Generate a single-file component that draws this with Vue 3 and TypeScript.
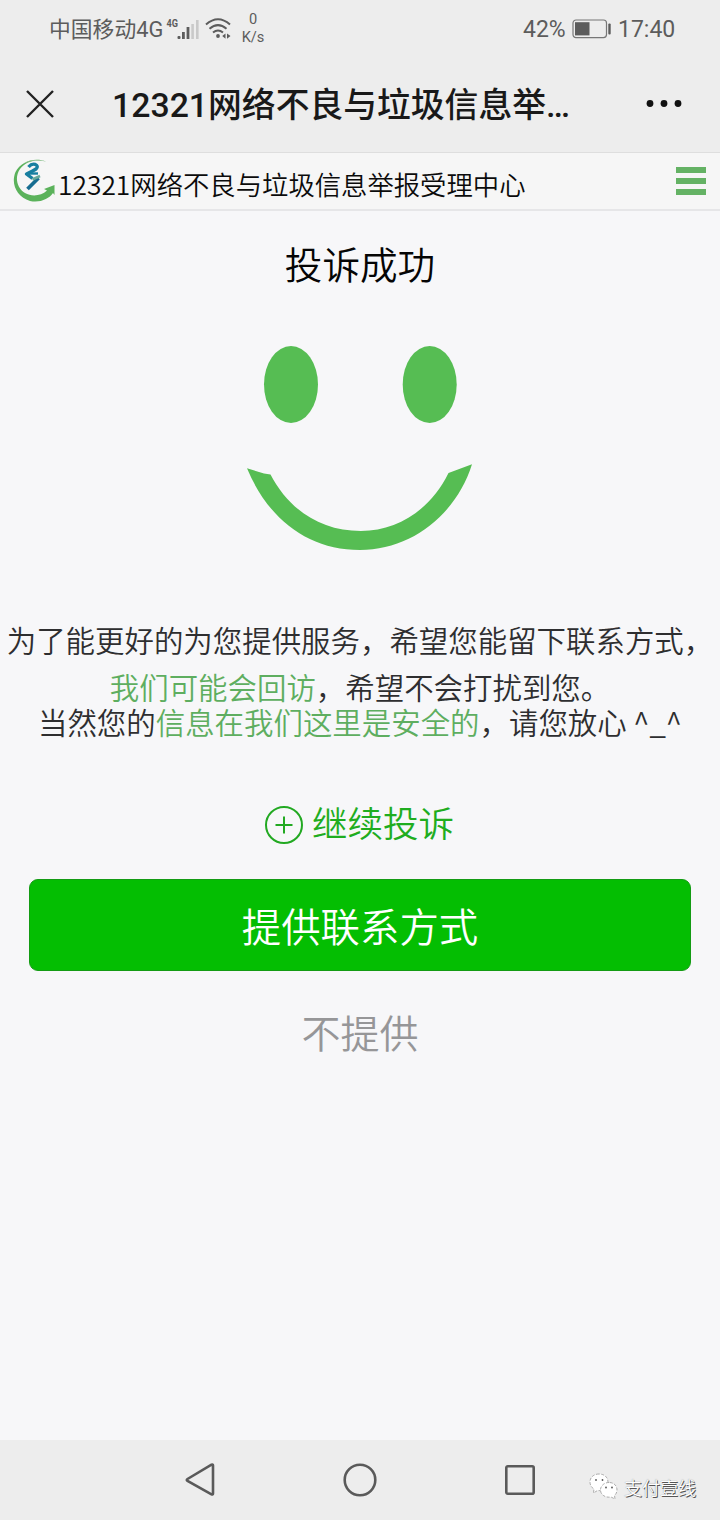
<script setup lang="ts">
const carrier = '中国移动4G'
const pageTitle = '12321网络不良与垃圾信息举…'
const siteName = '12321网络不良与垃圾信息举报受理中心'
</script>

<template>
  <div class="phone">
    <header class="top">
      <div class="status">
        <span class="carrier">{{ carrier }}</span>
        <svg class="signal" width="34" height="28" viewBox="0 0 34 28">
          <text x="0.500" y="12" class="net" textLength="11.5" lengthAdjust="spacingAndGlyphs">4G</text>
          <g fill="#5c5c5c">
            <rect x="11.5" y="21" width="3" height="3" rx="1" />
            <rect x="16" y="17" width="2.8" height="7" />
            <rect x="20.6" y="12" width="2.8" height="12" />
          </g>
          <g fill="#c9c9c9">
            <rect x="25.3" y="9" width="2.6" height="15" />
            <rect x="30" y="5" width="2.6" height="19" />
          </g>
        </svg>
        <svg class="wifi" width="28" height="24" viewBox="0 0 28 24">
          <g fill="none" stroke="#5c5c5c" stroke-width="2">
            <path d="M1 7.500Q13 -3 25 7.500" />
            <path d="M4.500 11.800Q13 4.500 21.500 11.800" />
            <path d="M8 15.500Q13 11.500 18 15.500" />
          </g>
          <circle cx="13" cy="19" r="1.900" fill="#5c5c5c" />
          <path d="M20.500 16.500v5.200l-3.300-2.600zM22 16.500v5.200l3.500-2.600z" fill="#5c5c5c" />
        </svg>
        <span class="speed"><span>0</span><span>K/s</span></span>
        <span class="percent">42%</span>
        <svg class="battery" width="40" height="20" viewBox="0 0 40 20">
          <rect x="1" y="1" width="33.500" height="17.600" rx="3" fill="none" stroke="#777" stroke-width="1.200" />
          <rect x="3" y="3.200" width="14.500" height="13.200" fill="#5c5c5c" />
          <rect x="36.300" y="4.500" width="2.400" height="11" rx="1" fill="#5c5c5c" />
        </svg>
        <span class="clock">17:40</span>
      </div>
      <div class="titlebar">
        <svg class="close" width="28" height="28" viewBox="0 0 28 28">
          <path d="M1 1 27 27M27 1 1 27" stroke="#222" stroke-width="2.400" />
        </svg>
        <h1>{{ pageTitle }}</h1>
        <svg class="more" width="38" height="8" viewBox="0 0 38 8" fill="#111">
          <circle cx="4" cy="3.500" r="3.400" /><circle cx="18" cy="3.500" r="3.400" /><circle cx="32" cy="3.500" r="3.400" />
        </svg>
      </div>
    </header>

    <nav class="sitebar">
      <svg class="logo" width="44" height="46" viewBox="0 0 44 46">
        <path d="M33 3.500C22-1 8 3 2.500 14C-2.500 26 4 39 17 43C27 45 36 41 40 35L41.500 37V27L31 31L34 32.500C28 38 19 39 12 35C3.500 29.500 1.500 19 7 11C13 3 23 1 33 3.500Z" fill="#5bb25b" />
        <path d="M33 3.500C26 .8 16 1.500 10 6C17 2.300 25 1.700 33 3.500Z" fill="#a9c4ae" />
        <path d="M15.500 9Q18.500 5.500 22 6.300Q26 8 23 11Q20 13 13.500 16L19.500 20.500" fill="none" stroke="#187fa0" stroke-width="3.400" stroke-linejoin="round" />
        <path d="M16 15.500H25" stroke="#187fa0" stroke-width="2.400" />
        <path d="M14.500 31 25.500 20" stroke="#176d91" stroke-width="3.800" />
        <path d="M19.500 21.500 27 18" stroke="#68a99a" stroke-width="2.600" />
      </svg>
      <span class="site">{{ siteName }}</span>
      <span class="menu"><i></i><i></i><i></i></span>
    </nav>

    <main>
      <h2>投诉成功</h2>
      <svg class="smile" width="226" height="206" viewBox="0 0 226 206" fill="#56bd53">
        <ellipse cx="44" cy="39.500" rx="27" ry="38.500" />
        <ellipse cx="182.700" cy="39.500" rx="27" ry="38.500" />
        <path d="M0 123.300L17 128.500L23.500 129.500C42 165 74 186 114 186C151 186 184 164 201.500 128L225 119.300C209 170 164 205 113 205C61 205 21 174 0 123.300Z" />
      </svg>
      <p class="first">为了能更好的为您提供服务，希望您能留下联系方式，</p>
      <p class="second"><em>我们可能会回访</em>，希望不会打扰到您。</p>
      <p class="third">当然您的<em>信息在我们这里是安全的</em>，请您放心 ^_^</p>
      <a class="again">
        <svg width="40" height="40" viewBox="0 0 40 40" fill="none" stroke="#22a922" stroke-width="2">
          <circle cx="20" cy="20" r="18" /><path d="M11.500 20h17M20 11.500v17" />
        </svg>
        <span>继续投诉</span>
      </a>
      <button class="primary">提供联系方式</button>
      <a class="skip">不提供</a>
    </main>

    <footer>
      <svg class="back" width="32" height="36" viewBox="0 0 32 36"><path d="M29 3.500V31.500Q29 33 27.500 32.300L3.500 19Q2 18 3.500 17L27.500 2.700Q29 2 29 3.500Z" /></svg>
      <svg class="home" width="36" height="36" viewBox="0 0 36 36"><circle cx="18" cy="18" r="15.300" /></svg>
      <svg class="recent" width="32" height="32" viewBox="0 0 32 32"><rect x="2.300" y="2.300" width="27.400" height="27.400" rx="1.500" /></svg>
      <div class="watermark">
        <svg width="30" height="28" viewBox="0 0 30 28">
          <g fill="#fff" stroke="#999" stroke-width=".8" stroke-dasharray="3 1.500">
            <path d="M10 1C4.500 1 1 4.600 1 9C1 12 2.500 14.500 5 16L4.500 20L8.500 17.500C14 18.500 19 14.500 19 9C19 4.500 15.500 1 10 1Z" />
            <path d="M20 9.500C15 9.500 11.500 13 11.500 17C11.500 21.500 16 25 22 24L26 26L25.500 22.500C30 18.500 28.500 9.500 20 9.500Z" />
          </g>
          <g fill="#555"><circle cx="7" cy="7" r=".9" /><circle cx="13.500" cy="7" r=".9" /><circle cx="17" cy="14.500" r=".9" /><circle cx="23" cy="14.500" r=".9" /></g>
        </svg>
        <span>支付壹线</span>
      </div>
    </footer>
  </div>
</template>

<style>
body {
  margin: 0;
}
</style>

<style scoped>
* {
  box-sizing: border-box;
}
.phone {
  width: 720px;
  height: 1520px;
  display: flex;
  flex-direction: column;
  background: #f7f7f9;
  font-family: "Noto Sans CJK SC DemiLight", "Noto Sans CJK SC", sans-serif;
  font-weight: 350;
  overflow: hidden;
  white-space: nowrap;
}
.top {
  height: 153px;
  background: #ededed;
  border-bottom: 1px solid #dedede;
}
.status {
  height: 58px;
  display: flex;
  align-items: center;
  padding-left: 49px;
  color: #5c5c5c;
  font: 23px/58px Roboto, "Noto Sans CJK SC", sans-serif;
}
.carrier {
  width: 117px;
  padding-top: 2px;
  font-size: 21.8px;
}
.net {
  font: 700 11px Roboto, sans-serif;
  fill: #5c5c5c;
}
.wifi {
  margin-left: 5px;
}
.speed {
  width: 24px;
  margin-left: 8px;
  display: flex;
  flex-direction: column;
  align-items: center;
  font-size: 14.6px;
  line-height: 18px;
  padding-bottom: 2px;
}
.percent {
  margin-left: 258px;
  width: 49px;
  padding-top: 1px;
}
.clock {
  margin-left: 6px;
  padding-top: 1px;
}
.titlebar {
  height: 94px;
  display: flex;
  align-items: center;
  padding: 0 36px 2px 26px;
}
h1 {
  margin: 3px 0 0 58px;
  font: 500 33.8px/50px Roboto, "Noto Sans CJK SC", sans-serif;
  color: #191919;
}
.more {
  margin-left: auto;
}
.sitebar {
  height: 58px;
  display: flex;
  align-items: center;
  padding: 0 14px 0 13px;
  background: #f6f6f6;
  border-bottom: 2px solid #e6e6e8;
}
.site {
  margin: 5px 0 0 1px;
  font-size: 26.35px;
  line-height: 40px;
  color: #0b0b0b;
}
.menu {
  margin: -1px 0 0 auto;
  display: flex;
  flex-direction: column;
  gap: 5px;
}
.menu i {
  width: 30px;
  height: 6px;
  background: #64b264;
}
main {
  flex: 1;
  display: flex;
  flex-direction: column;
  align-items: center;
}
h2 {
  margin: 24px 0 0;
  font-weight: inherit;
  font-size: 37.6px;
  line-height: 56px;
  color: #050505;
}
.smile {
  margin-top: 54px;
}
p {
  margin: 0;
  font-size: 29.45px;
  line-height: 34px;
  color: #2e2e30;
}
em {
  font-style: normal;
  color: #5eae60;
}
.first {
  margin-top: 71px;
}
.second {
  margin-top: 13px;
}
.third {
  margin-top: 1px;
}
.again {
  display: flex;
  align-items: center;
  gap: 8px;
  margin: 60px 2px 0 0;
  color: #1fad1f;
  font-size: 35.5px;
  line-height: 48px;
}
.again svg {
  margin-top: 5px;
}
.primary {
  width: 662px;
  height: 92px;
  margin: 33px 0 0;
  padding: 0;
  border: 1px solid #149b14;
  border-radius: 9px;
  background: #04be02;
  color: #fff;
  font-family: inherit;
  font-weight: inherit;
  font-size: 39.4px;
  line-height: 90px;
}
.skip {
  margin-top: 32px;
  color: #969698;
  font-size: 39px;
  line-height: 56px;
}
footer {
  height: 80px;
  display: flex;
  align-items: center;
  padding-left: 184px;
  background: #ededed;
  fill: none;
  stroke: #5a5a5a;
  stroke-width: 2.6px;
}
.home {
  margin-left: 126px;
}
.recent {
  margin-left: 126px;
}
.watermark {
  display: flex;
  align-items: center;
  margin: 14px 0 0 53px;
  stroke: none;
}
.watermark span {
  margin-left: 5px;
  font-size: 18px;
  line-height: 26px;
  color: #fff;
  text-shadow: 1px 1px 0 #555, 0 0 1px #777;
}
</style>
